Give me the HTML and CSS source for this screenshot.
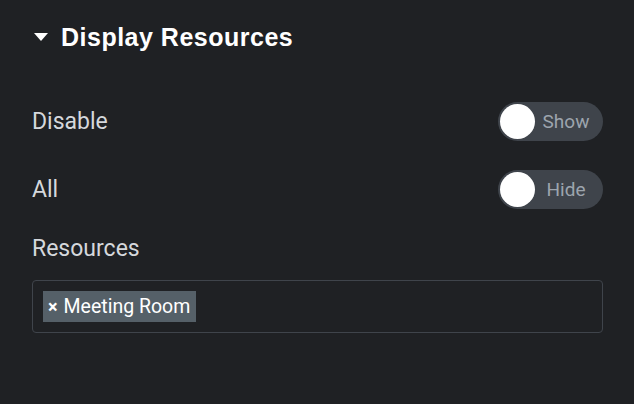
FILE: index.html
```html
<!DOCTYPE html>
<html>
<head>
<meta charset="utf-8">
<link rel="stylesheet" href="styles.css">
</head>
<body>
<div class="panel">
  <div class="section-title">
    <svg class="caret" width="14" height="10" viewBox="0 0 14 10"><path d="M0 1 L14 1 L7 9 Z" fill="#ffffff"/></svg>
    <span>Display Resources</span>
  </div>
  <div class="control row1">
    <label class="label">Disable</label>
    <div class="switch"><span class="knob"></span><span class="switch-text">Show</span></div>
  </div>
  <div class="control row2">
    <label class="label">All</label>
    <div class="switch"><span class="knob"></span><span class="switch-text">Hide</span></div>
  </div>
  <div class="control-block">
    <label class="label">Resources</label>
    <div class="select">
      <span class="tag"><span class="tag-x">×</span>Meeting Room</span>
    </div>
  </div>
</div>
</body>
</html>
```
FILE: styles.css
```css
html, body {
  margin: 0;
  padding: 0;
  background: #1f2124;
  width: 634px;
  height: 404px;
  overflow: hidden;
  font-family: Roboto, "Liberation Sans", sans-serif;
}
.panel {
  padding: 20px 31px 0 32px;
}
.section-title {
  display: flex;
  align-items: center;
  gap: 13px;
  height: 34px;
  color: #ffffff;
  font-family: "Liberation Sans", Arial, sans-serif;
  font-weight: 700;
  font-size: 25px;
  letter-spacing: 0.5px;
}
.caret { margin-left: 2px; }
.control {
  display: flex;
  align-items: center;
  justify-content: space-between;
  height: 39px;
}
.row1 { margin-top: 48px; }
.row2 { margin-top: 29px; }
.label {
  color: #d5d8dc;
  font-size: 23px;
}
.switch {
  width: 105px;
  height: 39px;
  border-radius: 20px;
  background: #3f444b;
  display: flex;
  align-items: center;
  box-sizing: border-box;
  padding-left: 2px;
}
.knob {
  width: 35px;
  height: 35px;
  border-radius: 50%;
  background: #ffffff;
  flex: none;
}
.switch-text {
  flex: 1;
  text-align: center;
  color: #9da5ae;
  font-size: 19px;
  padding-right: 6px;
}
.control-block { margin-top: 25px; }
.control-block .label { display: block; line-height: 30px; }
.select {
  margin-top: 16px;
  height: 53px;
  border: 1px solid #3f444b;
  border-radius: 4px;
  box-sizing: border-box;
  display: flex;
  align-items: center;
  padding-left: 10px;
}
.tag {
  background: #556068;
  color: #ffffff;
  font-size: 19.5px;
  height: 31px;
  display: flex;
  align-items: center;
  padding: 0 6px 0 5px;
}
.tag-x {
  font-size: 18px;
  font-weight: 700;
  margin-right: 6px;
}
```
